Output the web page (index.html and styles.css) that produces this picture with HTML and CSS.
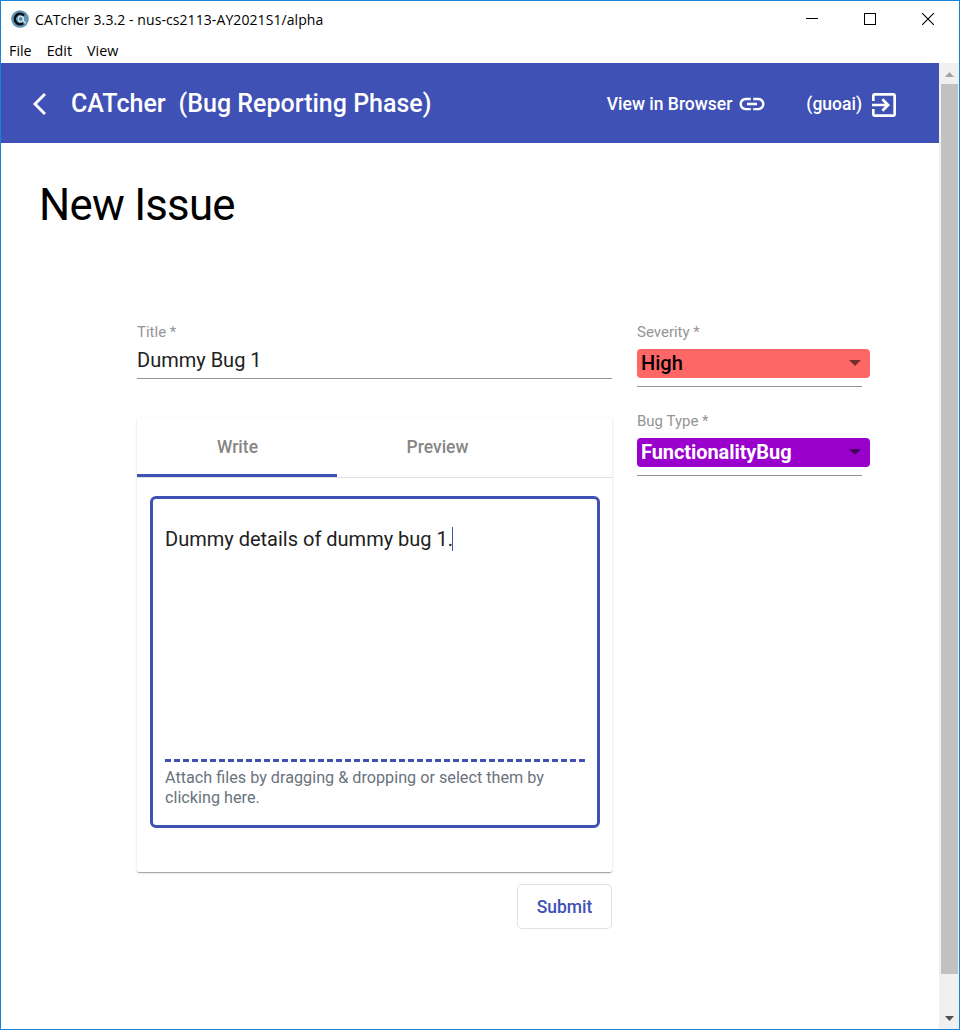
FILE: index.html
```html
<!DOCTYPE html>
<html lang="en">
<head>
<meta charset="utf-8">
<title>CATcher</title>
<link rel="stylesheet" href="styles.css">
</head>
<body>
<div class="window">
  <div class="titlebar">
    <svg class="app-icon" width="18" height="18" viewBox="0 0 18 18"><circle cx="9" cy="9" r="8.8" fill="#6095b2"/><path d="M13 5.6A5.2 5.2 0 1 0 12.2 13.2" fill="none" stroke="#0b0f14" stroke-width="2.5"/><circle cx="9.8" cy="9" r="2.6" fill="#5b8eac" stroke="#d7e7ef" stroke-width="1.1"/><path d="M12.3 7v3.6l2.3 2.8" fill="none" stroke="#d7e7ef" stroke-width="1.2"/></svg>
    <span class="app-name">CATcher 3.3.2 - nus-cs2113-AY2021S1/alpha</span>
    <div class="controls">
      <svg width="12" height="12" viewBox="0 0 12 12"><path d="M0 5.5h12" stroke="#000"/></svg>
      <svg width="12" height="12" viewBox="0 0 12 12"><rect x=".5" y=".5" width="11" height="11" fill="none" stroke="#000"/></svg>
      <svg width="12" height="12" viewBox="0 0 12 12"><path d="M0 0l12 12M12 0L0 12" stroke="#000" stroke-width="1.1"/></svg>
    </div>
  </div>
  <nav class="menubar"><span>File</span><span>Edit</span><span>View</span></nav>
  <div class="viewport">
    <div class="page">
      <header class="toolbar">
        <svg class="back" width="15" height="24" viewBox="0 0 15 24"><path d="M14 2L4 12L14 22" fill="none" stroke="#fff" stroke-width="2.9"/></svg>
        <span class="brand">CATcher</span>
        <span class="phase">(Bug Reporting Phase)</span>
        <span class="spacer"></span>
        <span class="action browser">View in Browser</span>
        <svg class="link" width="30" height="30" viewBox="0 0 24 24" fill="#fff"><path d="M3.9 12c0-1.71 1.39-3.1 3.1-3.1h4V7H7c-2.76 0-5 2.24-5 5s2.24 5 5 5h4v-1.9H7c-1.71 0-3.1-1.39-3.1-3.1zM8 13h8v-2H8v2zm9-6h-4v1.9h4c1.71 0 3.1 1.39 3.1 3.1s-1.39 3.1-3.1 3.1h-4V17h4c2.76 0 5-2.24 5-5s-2.24-5-5-5z"/></svg>
        <span class="action user">(guoai)</span>
        <svg class="exit" width="32" height="32" viewBox="0 0 24 24" fill="#fff"><path d="M10.09 15.59L11.5 17l5-5-5-5-1.41 1.41L12.67 11H3v2h9.67l-2.58 2.59zM19 3H5c-1.11 0-2 .9-2 2v4h2V5h14v14H5v-4H3v4c0 1.1.89 2 2 2h14c1.1 0 2-.9 2-2V5c0-1.1-.9-2-2-2z"/></svg>
      </header>
      <h1 class="heading">New Issue</h1>
      <main class="form">
        <section class="main-column">
          <div class="field">
            <div class="label">Title *</div>
            <div class="value">Dummy Bug 1</div>
          </div>
          <div class="card">
            <div class="tabs"><div class="tab active">Write</div><div class="tab">Preview</div></div>
            <div class="editor">
              <div class="text">Dummy details of dummy bug 1.<span class="caret"></span></div>
              <svg class="dashes" width="420" height="3" viewBox="0 0 420 3"><path d="M0 1.5H420" stroke="#3f51b5" stroke-width="3" stroke-dasharray="6 3"/></svg>
              <div class="attach">Attach files by dragging &amp; dropping or select them by clicking here.</div>
            </div>
          </div>
          <div class="submit">Submit</div>
        </section>
        <aside class="side-column">
          <div class="select-field">
            <div class="label">Severity *</div>
            <div class="select high"><span>High</span><i class="arrow"></i></div>
          </div>
          <div class="select-field">
            <div class="label">Bug Type *</div>
            <div class="select functionality"><span>FunctionalityBug</span><i class="arrow"></i></div>
          </div>
        </aside>
      </main>
    </div>
    <div class="scrollbar">
      <svg width="9" height="5" viewBox="0 0 9 5"><path d="M0 5L4.5 0L9 5z" fill="#a3a3a3"/></svg>
      <div class="thumb"></div>
      <svg class="down" width="9" height="5" viewBox="0 0 9 5"><path d="M0 0L4.5 5L9 0z" fill="#505050"/></svg>
    </div>
  </div>
</div>
</body>
</html>
```
FILE: styles.css
```css
* { box-sizing: border-box; }
body { margin: 0; background: #fff; font-family: Roboto, sans-serif; color: #000; }
svg { display: block; flex: none; }
.window { width: 960px; height: 1030px; border: 1px solid #1883d7; display: flex; flex-direction: column; overflow: hidden; }
.titlebar { height: 37px; display: flex; align-items: center; padding-left: 10px; font: 14px/20px "Open Sans", sans-serif; white-space: nowrap; }
.app-icon { margin-bottom: 1px; }
.app-name { margin-left: 6px; letter-spacing: 0.08px; }
.controls { display: flex; gap: 46px; margin-left: auto; padding: 0 25px 1px 0; }
.menubar { height: 25px; display: flex; gap: 15px; padding: 3px 0 0 8px; font: 14.3px/20px "Open Sans", sans-serif; }
.viewport { display: flex; flex: 1; min-height: 0; }
.page { width: 938px; }
.toolbar { height: 80px; background: #3f51b5; color: #fff; display: flex; align-items: center; padding: 0 39px 0 30px; font-weight: 500; font-size: 25px; white-space: nowrap; }
.back { margin-top: 2px; }
.brand { margin-left: 25px; padding-top: 1px; }
.phase { margin-left: 13px; padding-top: 1px; }
.spacer { flex: 1; }
.action { font-size: 17.5px; padding-top: 2px; }
.browser { margin-right: -1px; }
.link { margin: 2px 0 0 6px; }
.user { margin-left: 39px; }
.exit { margin: 4px 0 0 6px; }
.heading { margin: 35px 0 0 38px; font-size: 43.75px; line-height: 54px; font-weight: 400; letter-spacing: -0.75px; }
.form { display: flex; gap: 25px; margin: 88px 0 0 136px; }
.main-column { width: 475px; }
.side-column { width: 233px; }
.field { height: 59px; border-bottom: 1px solid #949494; }
.label { font-size: 15px; line-height: 20px; color: #949494; padding-top: 2px; }
.value { font-size: 20px; line-height: 24px; margin-top: 6px; color: #212121; }
.card { margin-top: 38px; height: 455px; border-radius: 2px; box-shadow: 0 2px 1px -1px rgba(0,0,0,.2), 0 1px 1px rgba(0,0,0,.14), 0 1px 3px rgba(0,0,0,.12); }
.tabs { display: flex; height: 61px; border-bottom: 1px solid #e0e0e0; }
.tab { width: 200px; height: 60px; padding-left: 1px; font-size: 17.5px; line-height: 60px; font-weight: 500; text-align: center; color: #868686; }
.tab.active { border-bottom: 3px solid #3f51b5; }
.editor { margin: 18px 12px 0 13px; height: 332px; border: 3px solid #3f51b5; border-radius: 6px; padding: 28px 12px 0; }
.text { height: 232px; display: flex; font-size: 20px; line-height: 24px; color: #212121; }
.caret { width: 1px; height: 24px; margin-left: -1px; background: #3f51b5; }
.attach { margin-top: 6px; font-size: 16.22px; line-height: 20px; color: #6a737d; }
.submit { margin: 12px 0 0 auto; width: 95px; height: 45px; border: 1px solid #e0e0e0; border-radius: 5px; color: #3f51b5; font-size: 17.5px; line-height: 44px; font-weight: 500; text-align: center; }
.select-field { height: 89px; }
.select { height: 29px; margin-top: 7px; border-radius: 4px; padding: 0 9px 0 4px; display: flex; align-items: center; justify-content: space-between; font-size: 20px; font-weight: 500; }
.select span { padding-bottom: 2px; }
.high { background: #f66; }
.functionality { background: #90c; color: #fff; font-weight: 700; letter-spacing: -0.07px; }
.arrow { border: 6.5px solid transparent; border-top: 6px solid rgba(0,0,0,.54); border-bottom: 0; margin-bottom: 1px; }
.select-field::after { content: ""; display: block; width: 225px; height: 1px; margin-top: 8px; background: #949494; }
.scrollbar { width: 20px; background: #f0f0f0; display: flex; flex-direction: column; align-items: center; padding-top: 9px; }
.thumb { width: 17px; height: 890px; margin-top: 7px; background: #c1c1c1; }
.down { margin-top: 42px; }
```
